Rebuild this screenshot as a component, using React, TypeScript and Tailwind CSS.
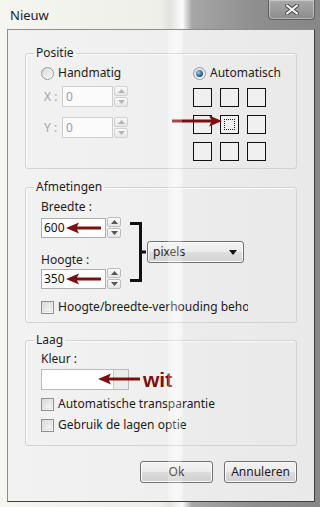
import React from 'react';

const font = "font-['Noto_Sans','Open_Sans','DejaVu_Sans',sans-serif]";

const Radio: React.FC<{ checked?: boolean }> = ({ checked }) => (
  <span className="w-[13px] h-[13px] rounded-full border border-[#9a9a9a] bg-[linear-gradient(135deg,#d8d8d8,#fbfbfb)] flex items-center justify-center shrink-0">
    {checked && (
      <span className="w-[7px] h-[7px] rounded-full bg-[radial-gradient(circle_at_35%_35%,#9cc8ee,#1f4f7d_70%)]" />
    )}
  </span>
);

const Check: React.FC = () => (
  <span className="w-[13px] h-[13px] border border-[#8f8f8f] bg-[linear-gradient(135deg,#d6d6d6,#fdfdfd)] shrink-0 p-[1px]">
    <span className="block w-full h-full border border-[#e2e2e2]" />
  </span>
);

const Spinner: React.FC<{ disabled?: boolean }> = ({ disabled }) => {
  const c = disabled ? 'text-[#b5b5b5] border-[#d2d2d2]' : 'text-[#555] border-[#bdbdbd]';
  return (
    <div className="flex flex-col gap-[1px] ml-[1px]">
      <span className={`w-[14px] h-[10px] border rounded-[2px] bg-[linear-gradient(#fafafa,#e6e6e6)] flex items-center justify-center ${c}`}>
        <svg width="7" height="4" viewBox="0 0 7 4"><path d="M0 4L3.5 0L7 4Z" fill="currentColor" /></svg>
      </span>
      <span className={`w-[14px] h-[10px] border rounded-[2px] bg-[linear-gradient(#fafafa,#e6e6e6)] flex items-center justify-center ${c}`}>
        <svg width="7" height="4" viewBox="0 0 7 4"><path d="M0 0L3.5 4L7 0Z" fill="currentColor" /></svg>
      </span>
    </div>
  );
};

// annotation arrow, head on the left unless flipped
const RedArrow: React.FC<{ width: number; right?: boolean }> = ({ width, right }) => (
  <svg width={width} height="12" viewBox={`0 0 ${width} 12`} className={right ? 'scale-x-[-1]' : ''}>
    <path d={`M0 6L13 0.5L11 4.5H${width}V7.5H11L13 11.5Z`} fill="#7a1010" />
  </svg>
);

const Group: React.FC<{ title: string; className?: string; children: React.ReactNode }> = ({ title, className, children }) => (
  <fieldset className={`border border-[#d3d3d3] rounded-[3px] shadow-[inset_1px_1px_0_#fbfbfb] ${className ?? ''}`}>
    <legend className="ml-[8px] px-[2px] text-[12px] leading-[16px] text-[#1b1b1b]">{title}</legend>
    {children}
  </fieldset>
);

const Button: React.FC<{ label: string }> = ({ label }) => (
  <button className="w-[73px] h-[22px] rounded-[3px] border border-[#707070] bg-[linear-gradient(#f3f3f3_0%,#ebebeb_49%,#dddddd_50%,#cfcfcf_100%)] shadow-[inset_0_0_0_1px_#fbfbfb] text-[12px] text-[#1b1b1b] leading-none">
    {label}
  </button>
);

const App: React.FC = () => {
  const cells = Array.from({ length: 9 }, (_, i) => i);

  return (
    <div
      className={`${font} w-[320px] h-[507px] flex flex-col overflow-hidden bg-[linear-gradient(90deg,#f6f6f1_0%,#efefea_50%,#e2e2e0_53%,#fbfbfb_57%,#a6a6a6_60%,#8e8e8e_80%,#878787_100%)]`}
    >
      {/* title bar */}
      <div className="h-[29px] flex items-start shrink-0">
        <span className="pl-[10px] pt-[6px] text-[13px] leading-[18px] text-[#1c1c1c]">Nieuw</span>
        <div className="ml-auto mr-[5px] w-[47px] h-[20px] rounded-b-[4px] border border-t-0 border-[#5f5f5f] bg-[linear-gradient(#a9a9a9,#8d8d8d)] shadow-[inset_0_0_0_1px_rgba(255,255,255,0.35)] flex items-center justify-center">
          <svg width="14" height="11" viewBox="0 0 14 11">
            <path d="M2 1.5L12 9.5M12 1.5L2 9.5" stroke="#4b4b4b" strokeWidth="4" strokeLinecap="round" />
            <path d="M2 1.5L12 9.5M12 1.5L2 9.5" stroke="#f4f4f4" strokeWidth="2.2" strokeLinecap="round" />
          </svg>
        </div>
      </div>

      {/* client area */}
      <div className="relative flex-1 ml-[7px] mr-[5px] mb-[5px] border border-[#8c8c8c] border-r-[#3f3f3f] border-b-[#3f3f3f] bg-[linear-gradient(90deg,#f2f2f2_0%,#efefef_52%,#f7f7f7_55%,#ececec_58%,#e9e9e9_100%)] flex flex-col px-[17px] pt-[15px]">
        <Group title="Positie" className="h-[124px]">
          <div className="flex pl-[15px] pt-[5px]">
            <div className="w-[152px] flex flex-col">
              <label className="flex items-center gap-[4px] h-[14px] text-[12px] text-[#1b1b1b]">
                <Radio />
                Handmatig
              </label>
              {['X', 'Y'].map((k, i) => (
                <div key={k} className={`flex items-center h-[21px] ${i === 0 ? 'mt-[6px]' : 'mt-[10px]'}`}>
                  <span className="w-[21px] pl-[3px] text-[12px] text-[#a4a4a4]">{k} :</span>
                  <div className="w-[51px] h-[21px] border border-[#cfcfcf] bg-[#fbfbfb] text-[12px] text-[#9c9c9c] pl-[3px] leading-[19px]">0</div>
                  <Spinner disabled />
                </div>
              ))}
            </div>
            <div className="flex flex-col">
              <label className="flex items-center gap-[4px] h-[14px] text-[12px] text-[#1b1b1b]">
                <Radio checked />
                Automatisch
              </label>
              <div className="relative mt-[8px] grid grid-cols-[repeat(3,19px)] gap-x-[8px] gap-y-[8px]">
                {cells.map((c) => (
                  <div key={c} className="w-[19px] h-[19px] border-[1.5px] border-[#111] bg-[#f0f0f0] p-[3px]">
                    {c === 4 && <div className="w-full h-full border border-dotted border-[#222]" />}
                  </div>
                ))}
                <div className="absolute left-[-21px] top-[27px] flex">
                  <RedArrow width={50} right />
                </div>
              </div>
            </div>
          </div>
        </Group>

        <Group title="Afmetingen" className="mt-[10px] h-[144px]">
          <div className="pl-[15px] pt-[4px] flex flex-col">
            <div className="flex items-start">
              <div className="flex flex-col">
                <span className="text-[12px] leading-[16px] text-[#1b1b1b]">Breedte :</span>
                <div className="flex items-center mt-[2px]">
                  <div className="w-[65px] h-[20px] border border-[#abadb3] bg-white flex items-center pl-[2px]">
                    <span className="text-[12px] text-[#111] w-[22px]">600</span>
                    <RedArrow width={35} />
                  </div>
                  <Spinner />
                </div>
                <span className="mt-[14px] text-[12px] leading-[16px] text-[#1b1b1b]">Hoogte :</span>
                <div className="flex items-center">
                  <div className="w-[65px] h-[20px] border border-[#abadb3] bg-white flex items-center pl-[2px]">
                    <span className="text-[12px] text-[#111] w-[22px]">350</span>
                    <RedArrow width={35} />
                  </div>
                  <Spinner />
                </div>
              </div>
              <svg className="mt-[23px] ml-[9px] shrink-0" width="17" height="60" viewBox="0 0 17 60">
                <path d="M0 1.5H10.5V58.5H0M10.5 30H16" stroke="#111" strokeWidth="3" fill="none" />
              </svg>
              <div className="mt-[42px] w-[97px] h-[22px] rounded-[3px] border border-[#707070] bg-[linear-gradient(#f4f4f4_0%,#ebebeb_49%,#dedede_50%,#d3d3d3_100%)] shadow-[inset_0_0_0_1px_#fafafa] flex items-center pl-[5px] pr-[6px]">
                <span className="text-[12px] text-[#1b1b1b] flex-1">pixels</span>
                <svg width="8" height="5" viewBox="0 0 8 5"><path d="M0 0H8L4 5Z" fill="#111" /></svg>
              </div>
            </div>
            <label className="mt-[11px] flex items-center gap-[4px] h-[14px] text-[12px] text-[#1b1b1b]">
              <Check />
              <span className="w-[190px] overflow-hidden whitespace-nowrap">Hoogte/breedte-verhouding behouden</span>
            </label>
          </div>
        </Group>

        <Group title="Laag" className="mt-[9px] h-[114px]">
          <div className="pl-[15px] pt-[3px] flex flex-col">
            <span className="text-[12px] leading-[16px] text-[#1b1b1b]">Kleur :</span>
            <div className="relative flex items-center mt-[2px]">
              <div className="flex w-[88px] h-[21px] border border-[#b9b9b9] bg-white">
                <div className="flex-1" />
                <div className="w-[15px] h-full border-l border-[#c9c9c9] bg-[#ececec]" />
              </div>
              <span className="ml-[14px] text-[21px] leading-[21px] font-bold text-[#7a1010] font-['Liberation_Sans',Arial,sans-serif]">wit</span>
              <div className="absolute left-[57px] top-[4px]">
                <RedArrow width={42} />
              </div>
            </div>
            <label className="mt-[7px] flex items-center gap-[4px] h-[14px] text-[12px] text-[#1b1b1b] whitespace-nowrap">
              <Check />
              Automatische transparantie
            </label>
            <label className="mt-[7px] flex items-center gap-[4px] h-[14px] text-[12px] text-[#1b1b1b]">
              <Check />
              Gebruik de lagen optie
            </label>
          </div>
        </Group>

        <div className="mt-[15px] flex justify-end gap-[11px]">
          <Button label="Ok" />
          <Button label="Annuleren" />
        </div>

        {/* glass reflection over the window */}
        <div className="pointer-events-none absolute top-0 bottom-0 left-[160px] w-[14px] bg-white/25" />
      </div>
    </div>
  );
};

export default App;
